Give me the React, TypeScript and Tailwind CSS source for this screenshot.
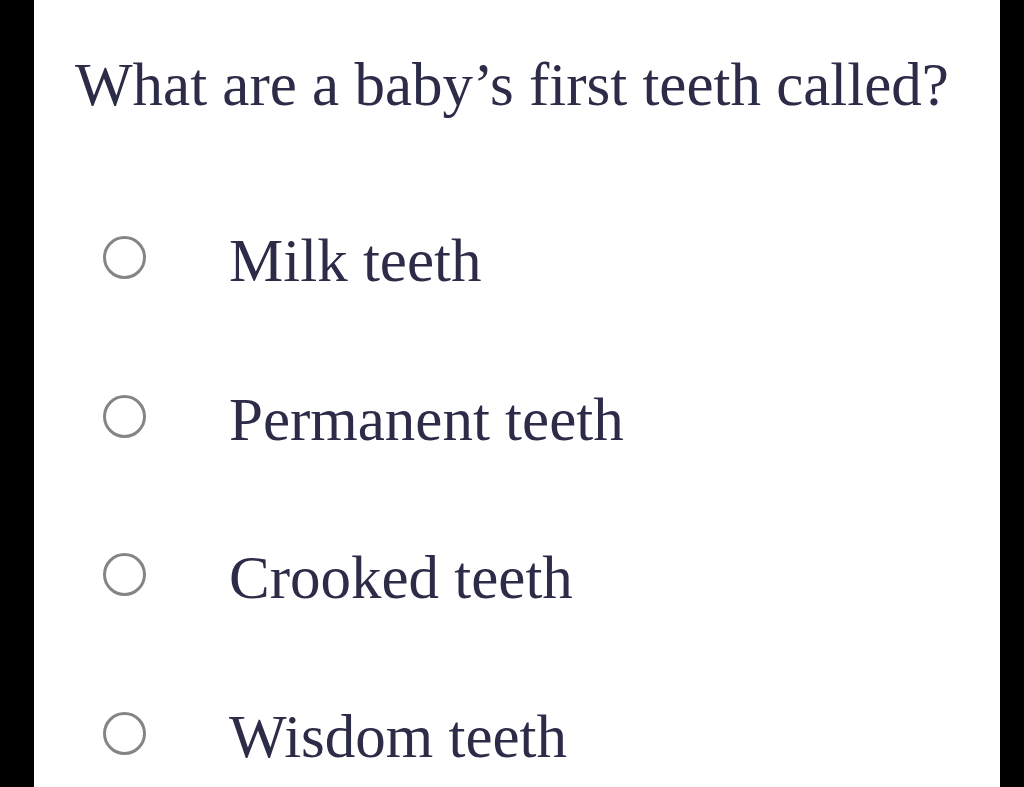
import React from "react";

const options = ["Milk teeth", "Permanent teeth", "Crooked teeth", "Wisdom teeth"];

export default function App() {
  return (
    <div className="h-[787px] w-full bg-black overflow-hidden">
      <div className="ml-[34px] w-[966px] h-full bg-white pl-[41px] pt-[52px] font-['Liberation_Serif',serif] text-[#2c2c48]">
        <h1 className="text-[61px] leading-[66px]">What are a baby’s first teeth called?</h1>
        <div className="mt-[110px] ml-[28px] flex flex-col gap-[92.5px]">
          {options.map((o) => (
            <label key={o} className="flex items-start gap-[83px]">
              <span className="mt-[8px] w-[43px] h-[43px] shrink-0 rounded-full border-[3px] border-[#858585] bg-white" />
              <span className="text-[61px] leading-[66px]">{o}</span>
            </label>
          ))}
        </div>
      </div>
    </div>
  );
}
